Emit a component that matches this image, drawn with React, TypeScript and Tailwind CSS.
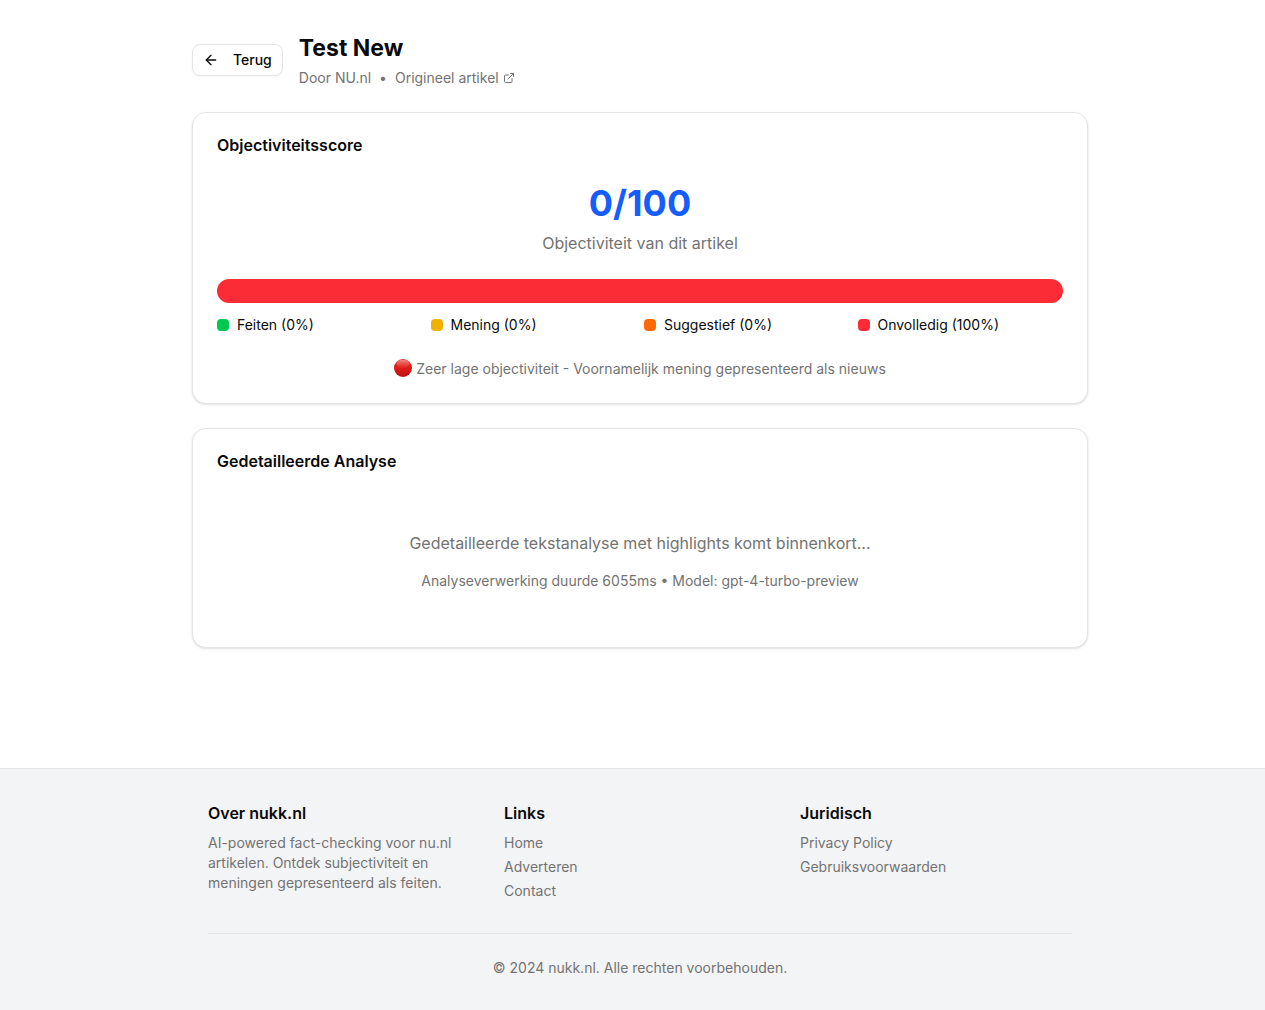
import type { ReactNode } from "react";
import { ArrowLeft, ExternalLink } from "lucide-react";

const scores = [
  { label: "Feiten", value: 0, color: "bg-green-500" },
  { label: "Mening", value: 0, color: "bg-yellow-500" },
  { label: "Suggestief", value: 0, color: "bg-orange-500" },
  { label: "Onvolledig", value: 100, color: "bg-red-500" },
];

function Card({ title, children }: { title: string; children: ReactNode }) {
  return (
    <section className="rounded-[14px] border border-neutral-200 bg-white p-6 shadow-sm">
      <h2 className="mb-[30px] text-base leading-4 font-semibold">{title}</h2>
      {children}
    </section>
  );
}

function RedCircle() {
  return (
    <svg viewBox="0 0 18 18" className="size-[18px] shrink-0" aria-hidden="true">
      <defs>
        <linearGradient id="ball" x1="0" y1="0" x2="0" y2="1">
          <stop offset="0" stopColor="#d3201c" />
          <stop offset="0.5" stopColor="#e01a17" />
          <stop offset="1" stopColor="#b81414" />
        </linearGradient>
        <linearGradient id="gloss" x1="0" y1="0" x2="0" y2="1">
          <stop offset="0" stopColor="#f79a92" stopOpacity="0.9" />
          <stop offset="1" stopColor="#ee5048" stopOpacity="0.25" />
        </linearGradient>
      </defs>
      <circle cx="9" cy="9" r="9" fill="url(#ball)" />
      <ellipse cx="9" cy="4.9" rx="6.8" ry="4.1" fill="url(#gloss)" />
    </svg>
  );
}

function LinkColumn({ title, links }: { title: string; links: string[] }) {
  return (
    <nav aria-label={title}>
      <h3 className="mb-2 font-semibold">{title}</h3>
      <ul className="space-y-1 text-sm text-neutral-500">
        {links.map((link) => (
          <li key={link}>
            <a href="#" className="hover:text-neutral-950">{link}</a>
          </li>
        ))}
      </ul>
    </nav>
  );
}

export default function App() {
  return (
    <div className="flex min-h-screen flex-col bg-white font-['Inter',sans-serif] text-neutral-950 antialiased">
      <main className="flex-1 pt-8 pb-[120px] pl-[15px]">
        <div className="mx-auto max-w-4xl">
          <header className="mb-6 flex items-center gap-4">
            <button
              type="button"
              className="flex h-8 items-center gap-3.5 rounded-lg border border-neutral-200 bg-white px-2.5 text-sm font-medium shadow-xs"
            >
              <ArrowLeft className="size-4" />
              Terug
            </button>
            <div>
              <h1 className="text-[23px] leading-8 font-bold">Test New</h1>
              <div className="mt-1 flex items-center gap-2 text-sm text-neutral-500">
                <span>Door NU.nl</span>
                <span>•</span>
                <a href="#" className="flex items-center gap-1">
                  Origineel artikel
                  <ExternalLink className="size-3" />
                </a>
              </div>
            </div>
          </header>

          <div className="space-y-6">
            <Card title="Objectiviteitsscore">
              <div className="text-center">
                <p className="text-4xl font-bold text-blue-600">0/100</p>
                <p className="mt-2 text-neutral-500">Objectiviteit van dit artikel</p>
              </div>
              <div className="mt-6 flex h-6 overflow-hidden rounded-full bg-gray-200">
                {scores.map((s) => (
                  <div key={s.label} className={s.color} style={{ width: `${s.value}%` }} />
                ))}
              </div>
              <ul className="mt-3 grid grid-cols-2 gap-2 text-sm md:grid-cols-4">
                {scores.map((s) => (
                  <li key={s.label} className="flex items-center gap-2">
                    <span className={`size-3 rounded ${s.color}`} />
                    <span>{`${s.label} (${s.value}%)`}</span>
                  </li>
                ))}
              </ul>
              <p className="mt-6 flex items-start justify-center gap-1 text-sm text-neutral-500">
                <RedCircle />
                Zeer lage objectiviteit - Voornamelijk mening gepresenteerd als nieuws
              </p>
            </Card>

            <Card title="Gedetailleerde Analyse">
              <div className="py-8 text-center text-neutral-500">
                <p>Gedetailleerde tekstanalyse met highlights komt binnenkort...</p>
                <p className="mt-4 text-sm">Analyseverwerking duurde 6055ms • Model: gpt-4-turbo-preview</p>
              </div>
            </Card>
          </div>
        </div>
      </main>

      <footer className="border-t border-neutral-200 bg-gray-100 pl-[15px]">
        <div className="mx-auto max-w-4xl px-4 py-8">
          <div className="grid grid-cols-1 gap-6 md:grid-cols-3">
            <div>
              <h3 className="mb-2 font-semibold">Over nukk.nl</h3>
              <p className="text-sm text-neutral-500">
                AI-powered fact-checking voor nu.nl artikelen. Ontdek subjectiviteit en meningen gepresenteerd als
                feiten.
              </p>
            </div>
            <LinkColumn title="Links" links={["Home", "Adverteren", "Contact"]} />
            <LinkColumn title="Juridisch" links={["Privacy Policy", "Gebruiksvoorwaarden"]} />
          </div>
          <p className="mt-8 border-t border-neutral-200 pt-6 text-center text-sm text-neutral-500">
            © 2024 nukk.nl. Alle rechten voorbehouden.
          </p>
        </div>
      </footer>
    </div>
  );
}
